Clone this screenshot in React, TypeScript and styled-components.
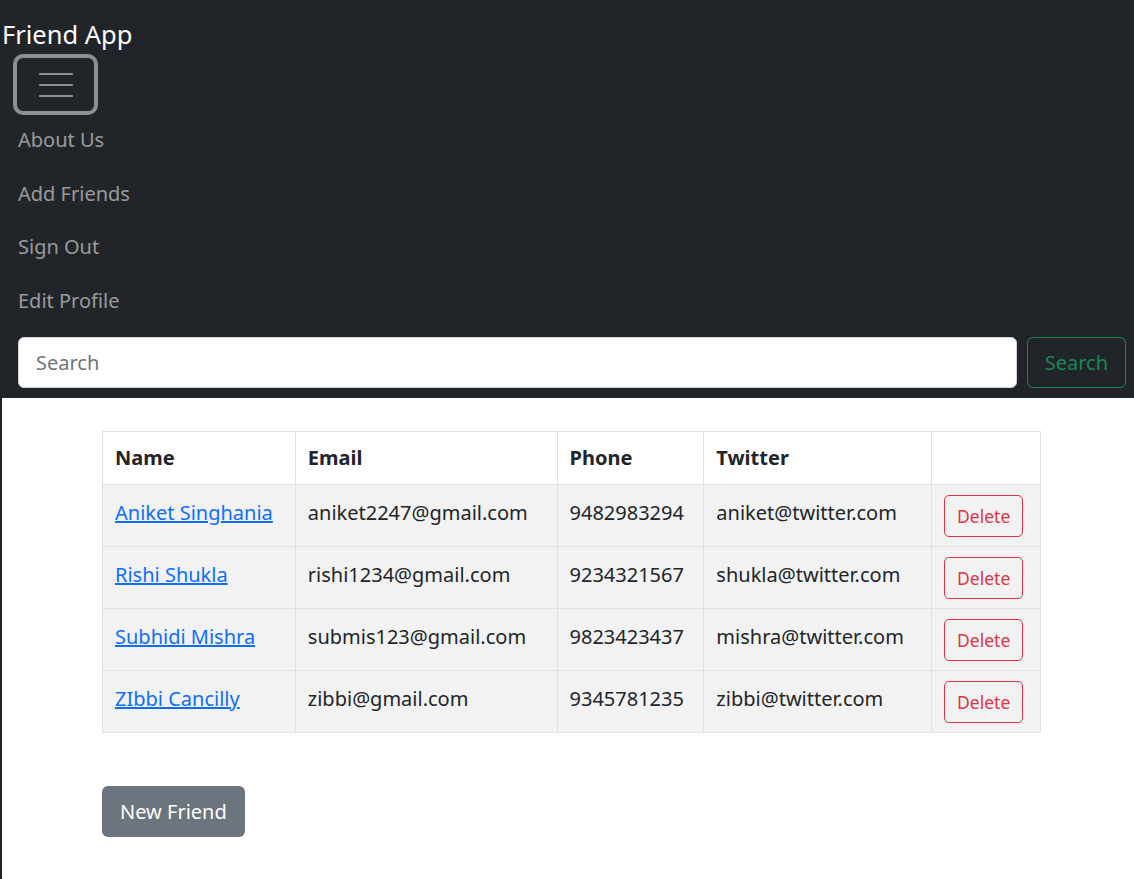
import React from 'react';
import styled, { createGlobalStyle } from 'styled-components';

const GlobalStyle = createGlobalStyle`
  html, body {
    margin: 0;
    padding: 0;
    background: #ffffff;
  }

  body {
    font-family: 'Noto Sans', 'Open Sans', sans-serif;
    font-size: 20px;
    color: #212529;
    border-left: 2px solid #1f2226;
    min-height: 879px;
    box-sizing: border-box;
  }
`;

const Navbar = styled.nav`
  background: #212529;
  padding: 0 8px 10px 0;
`;

const Brand = styled.a`
  display: block;
  color: #ffffff;
  font-size: 25.5px;
  line-height: 40px;
  padding-top: 14px;
  text-decoration: none;
`;

const Toggler = styled.button`
  display: flex;
  align-items: center;
  justify-content: center;
  width: 85px;
  height: 61px;
  margin-left: 11px;
  padding: 0;
  box-sizing: border-box;
  background: transparent;
  border: 4px solid #8e8f91;
  border-radius: 10px;
`;

const Collapse = styled.div`
  padding-left: 16px;
`;

const NavList = styled.ul`
  list-style: none;
  margin: 0;
  padding: 0;
`;

const NavItem = styled.li`
  height: 53.5px;
  box-sizing: border-box;
  padding-top: 10px;
`;

const NavLink = styled.a`
  display: block;
  line-height: 30px;
  color: rgba(255, 255, 255, 0.55);
  text-decoration: none;
`;

const SearchForm = styled.form`
  display: flex;
  gap: 10px;
  margin-top: 8px;
`;

const SearchInput = styled.input`
  flex: 1;
  height: 51px;
  box-sizing: border-box;
  border: 1px solid #ced4da;
  border-radius: 6px;
  padding: 0 17px;
  font-family: inherit;
  font-size: 20px;
  color: #212529;
  background: #ffffff;

  &::placeholder {
    color: #6c757d;
  }
`;

const OutlineButton = styled.button<{ $tone: string; $small?: boolean }>`
  background: transparent;
  border: 1px solid ${(p) => p.$tone};
  color: ${(p) => p.$tone};
  border-radius: ${(p) => (p.$small ? '5px' : '6px')};
  font-family: inherit;
  font-size: ${(p) => (p.$small ? '17.5px' : '20px')};
  height: ${(p) => (p.$small ? '42px' : '51px')};
  padding: ${(p) => (p.$small ? '0 12px' : '0 17px')};
  cursor: pointer;
`;

const Main = styled.main`
  margin-left: 100px;
  width: 939px;
  padding-top: 33px;
`;

const Table = styled.table`
  width: 100%;
  border-collapse: collapse;
  border: 1px solid #dee2e6;
`;

const HeadCell = styled.th<{ $w: number }>`
  width: ${(p) => p.$w}px;
  text-align: left;
  font-weight: 700;
  height: 53px;
  padding: 0 12px 2px;
  border: 1px solid #dee2e6;
  box-sizing: border-box;
`;

const Row = styled.tr`
  background: #f2f2f2;
`;

const Cell = styled.td`
  height: 62px;
  padding: 0 12px 6px;
  border: 1px solid #dee2e6;
  box-sizing: border-box;
  color: #212529;
  white-space: nowrap;
`;

const ActionCell = styled(Cell)`
  padding-bottom: 0;
`;

const NameLink = styled.a`
  color: #0d6efd;
  text-decoration: underline;
`;

const NewButton = styled.button`
  margin-top: 53px;
  background: #6c757d;
  color: #ffffff;
  border: none;
  border-radius: 6px;
  height: 51px;
  padding: 0 18px;
  font-family: inherit;
  font-size: 20px;
`;

function HamburgerIcon() {
  return (
    <svg width="34" height="26" viewBox="0 0 34 26">
      <g stroke="#8e8f91" strokeWidth="2.2" strokeLinecap="round">
        <line x1="1" y1="2" x2="33" y2="2" />
        <line x1="1" y1="13" x2="33" y2="13" />
        <line x1="1" y1="24" x2="33" y2="24" />
      </g>
    </svg>
  );
}

const friends = [
  { name: 'Aniket Singhania', email: 'aniket2247@gmail.com', phone: '9482983294', twitter: 'aniket@twitter.com' },
  { name: 'Rishi Shukla', email: 'rishi1234@gmail.com', phone: '9234321567', twitter: 'shukla@twitter.com' },
  { name: 'Subhidi Mishra', email: 'submis123@gmail.com', phone: '9823423437', twitter: 'mishra@twitter.com' },
  { name: 'ZIbbi Cancilly', email: 'zibbi@gmail.com', phone: '9345781235', twitter: 'zibbi@twitter.com' },
];

export default function App() {
  return (
    <>
      <GlobalStyle />
      <Navbar>
        <Brand href="#">Friend App</Brand>
        <Toggler aria-label="Toggle navigation">
          <HamburgerIcon />
        </Toggler>
        <Collapse>
          <NavList>
            <NavItem><NavLink href="#">About Us</NavLink></NavItem>
            <NavItem><NavLink href="#">Add Friends</NavLink></NavItem>
            <NavItem><NavLink href="#">Sign Out</NavLink></NavItem>
            <NavItem><NavLink href="#">Edit Profile</NavLink></NavItem>
          </NavList>
          <SearchForm onSubmit={(e) => e.preventDefault()}>
            <SearchInput placeholder="Search" />
            <OutlineButton $tone="#198754" type="submit">Search</OutlineButton>
          </SearchForm>
        </Collapse>
      </Navbar>
      <Main>
        <Table>
          <thead>
            <tr>
              <HeadCell $w={193}>Name</HeadCell>
              <HeadCell $w={262}>Email</HeadCell>
              <HeadCell $w={147}>Phone</HeadCell>
              <HeadCell $w={228}>Twitter</HeadCell>
              <HeadCell $w={109} />
            </tr>
          </thead>
          <tbody>
            {friends.map((f) => (
              <Row key={f.email}>
                <Cell><NameLink href="#">{f.name}</NameLink></Cell>
                <Cell>{f.email}</Cell>
                <Cell>{f.phone}</Cell>
                <Cell>{f.twitter}</Cell>
                <ActionCell>
                  <OutlineButton $tone="#dc3545" $small>Delete</OutlineButton>
                </ActionCell>
              </Row>
            ))}
          </tbody>
        </Table>
        <NewButton>New Friend</NewButton>
      </Main>
    </>
  );
}
